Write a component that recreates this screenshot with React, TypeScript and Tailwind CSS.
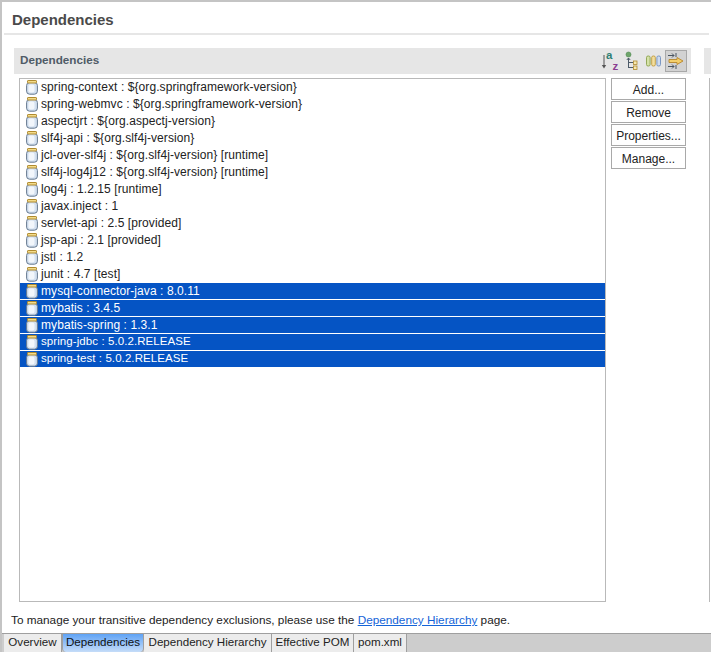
const deps: [string, boolean][] = [
  ["spring-context : ${org.springframework-version}", false],
  ["spring-webmvc : ${org.springframework-version}", false],
  ["aspectjrt : ${org.aspectj-version}", false],
  ["slf4j-api : ${org.slf4j-version}", false],
  ["jcl-over-slf4j : ${org.slf4j-version} [runtime]", false],
  ["slf4j-log4j12 : ${org.slf4j-version} [runtime]", false],
  ["log4j : 1.2.15 [runtime]", false],
  ["javax.inject : 1", false],
  ["servlet-api : 2.5 [provided]", false],
  ["jsp-api : 2.1 [provided]", false],
  ["jstl : 1.2", false],
  ["junit : 4.7 [test]", false],
  ["mysql-connector-java : 8.0.11", true],
  ["mybatis : 3.4.5", true],
  ["mybatis-spring : 1.3.1", true],
  ["spring-jdbc : 5.0.2.RELEASE", true],
  ["spring-test : 5.0.2.RELEASE", true],
];

function JarIcon() {
  return (
    <svg width="12" height="15" viewBox="0 0 12 15" className="shrink-0">
      <rect x="0.6" y="2.500" width="10.800" height="11.700" rx="3" fill="#d3e0f0" stroke="#66798f" strokeWidth="1" />
      <rect x="2.500" y="4.500" width="6" height="8" rx="2" fill="#f2f6fb" />
      <rect x="1.500" y="0.500" width="9" height="2.500" rx="0.600" fill="#f3dc8c" stroke="#b08a2e" strokeWidth="1" />
    </svg>
  );
}

function SortIcon() {
  return (
    <svg width="20" height="22" viewBox="0 0 20 22">
      <path d="M3 5v12" stroke="#555" strokeWidth="1" />
      <path d="M0.800 15l2.200 3.500 2.200-3.500z" fill="#555" />
      <text x="5" y="9" fontSize="11.500" fontWeight="700" fontFamily="'Liberation Sans', sans-serif" fill="#2f7f74">a</text>
      <text x="11.500" y="20" fontSize="11.500" fontWeight="700" fontFamily="'Liberation Sans', sans-serif" fill="#8c3f92">z</text>
    </svg>
  );
}

function TreeIcon() {
  return (
    <svg width="14" height="20" viewBox="0 0 14 20">
      <circle cx="3.500" cy="3.500" r="2.500" fill="#6fa56a" stroke="#4f8a52" strokeWidth="0.600" />
      <path d="M3.500 7v10M3.500 11.500h5M3.500 16.500h5M1.800 9l1.700-2 1.700 2" fill="none" stroke="#4d5a68" strokeWidth="1" />
      <rect x="8.500" y="10" width="3.500" height="3.500" fill="#f6e7b0" stroke="#b08a2e" strokeWidth="0.800" />
      <rect x="8.500" y="15" width="3.500" height="3.500" fill="#f6e7b0" stroke="#b08a2e" strokeWidth="0.800" />
    </svg>
  );
}

function ColumnsIcon() {
  return (
    <svg width="15" height="12" viewBox="0 0 15 12">
      <rect x="0.500" y="1" width="3.600" height="10" rx="1.500" fill="#d5e2a8" stroke="#8ba04e" strokeWidth="0.900" />
      <rect x="5.700" y="1" width="3.600" height="10" rx="1.500" fill="#f3dfa0" stroke="#c09a3a" strokeWidth="0.900" />
      <rect x="10.900" y="1" width="3.600" height="10" rx="1.500" fill="#cfdcf0" stroke="#6f8fbd" strokeWidth="0.900" />
    </svg>
  );
}

function ExcludeIcon() {
  return (
    <svg width="18" height="18" viewBox="0 0 18 18">
      <path d="M1 3.500h6M5 1.500l2 2-2 2M9 1v4M1 14.500h6M5 12.500l2 2-2 2M9 13v4" fill="none" stroke="#4a5560" strokeWidth="1" />
      <path d="M2 7.500h8V5.500l6 3.500-6 3.500v-2H2z" fill="#f4cf6a" stroke="#b8862a" strokeWidth="0.900" />
    </svg>
  );
}

function ActionButton({ label }: { label: string }) {
  return (
    <button className="h-[22px] w-[75px] border border-[#a9a9a9] bg-white pt-[1px] text-[12px] leading-none text-[#222]">
      {label}
    </button>
  );
}

function Tab({ label, width, active }: { label: string; width: string; active?: boolean }) {
  return (
    <div
      className={`flex h-[18px] items-center justify-center border-r border-[#9f9f9f] pb-[2px] text-[11.6px] ${width} ${
        active
          ? "rounded-b-[4px] border-l bg-gradient-to-b from-[#5fa3f5] to-[#c5dcf8] text-[#111]"
          : "bg-[#ececec] text-[#222]"
      }`}
    >
      {label}
    </div>
  );
}

export default function App() {
  return (
    <div className="flex h-[652px] w-[711px] flex-col overflow-hidden border-t-2 border-l-2 border-[#c4c4c4] bg-white font-['Liberation_Sans',Arial,sans-serif]">
      <div className="mx-[2px] mt-[9px] h-[24px] border-b-[2px] border-[#e6e6e6] pl-2 text-[15px] font-bold leading-[18px] text-[#4a4a4a]">
        Dependencies
      </div>

      <div className="mt-[13px] flex min-h-0 flex-1 pl-3">
        <div className="flex w-[677px] flex-col">
          <div className="flex h-[26px] shrink-0 items-center justify-between bg-[#e6e6e6] pl-[6px] pr-1">
            <span className="pb-[2px] text-[11.7px] font-bold text-[#4f5b66]">Dependencies</span>
            <div className="flex items-center">
              <SortIcon />
              <div className="ml-[4px]">
                <TreeIcon />
              </div>
              <div className="ml-[7px]">
                <ColumnsIcon />
              </div>
              <div className="ml-[4px] flex h-[22px] w-[22px] items-center justify-center border border-[#a8a8a8] bg-[#d2d2d2]">
                <ExcludeIcon />
              </div>
            </div>
          </div>

          <div className="mt-[4px] flex gap-[5px] pl-[5px]">
            <div className="h-[524px] w-[587px] border border-[#b9b9b9] bg-white">
              {deps.map(([label, selected]) => (
                <div
                  key={label}
                  className={`flex h-[17px] items-center gap-[3px] pl-[6px] tracking-[0.08px] ${
                    label.includes("RELEASE") ? "text-[11.5px]" : "text-[12px]"
                  } ${selected ? "border-b border-white bg-[#0554c4] text-white" : "text-[#222]"}`}
                >
                  <JarIcon />
                  <span className={selected ? "" : "pb-[2px]"}>{label}</span>
                </div>
              ))}
            </div>
            <div className="flex flex-col gap-[1px]">
              <ActionButton label="Add..." />
              <ActionButton label="Remove" />
              <ActionButton label="Properties..." />
              <ActionButton label="Manage..." />
            </div>
          </div>
        </div>

        <div className="ml-[13px] flex flex-1 flex-col">
          <div className="h-[26px] bg-[#e6e6e6]" />
          <div className="ml-[5px] mt-[4px] h-[524px] border-l border-[#b9b9b9]" />
        </div>
      </div>

      <p className="h-[24px] pl-[9px] pt-[2px] text-[11.77px] leading-[17px] text-[#222]">
        To manage your transitive dependency exclusions, please use the{" "}
        <a className="text-[#1464d8] underline">Dependency Hierarchy</a> page.
      </p>

      <div className="flex h-[19px] shrink-0 border-t border-[#9f9f9f] bg-[#cdcdcd] pl-[2px]">
        <Tab label="Overview" width="w-[58px]" />
        <Tab label="Dependencies" width="w-[82px]" active />
        <Tab label="Dependency Hierarchy" width="w-[128px]" />
        <Tab label="Effective POM" width="w-[82px]" />
        <Tab label="pom.xml" width="w-[53px]" />
      </div>
    </div>
  );
}
